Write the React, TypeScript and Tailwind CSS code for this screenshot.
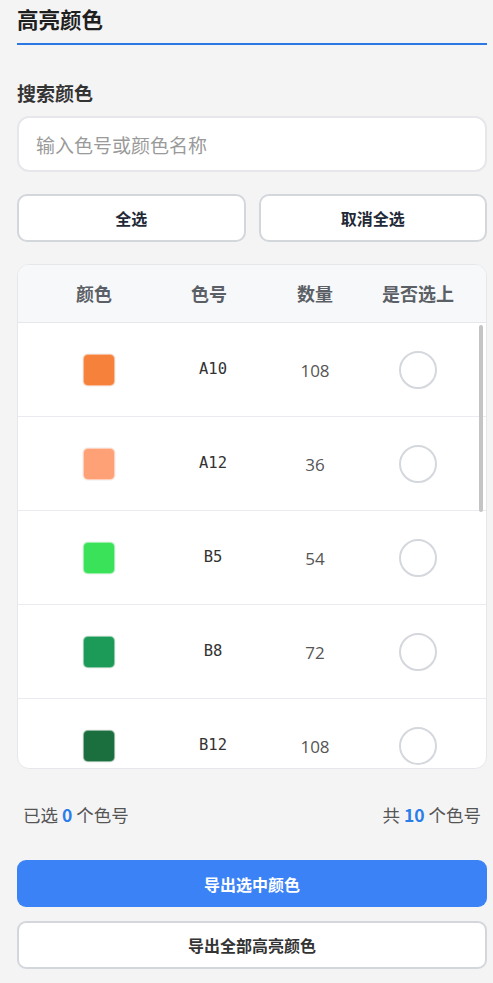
import React from "react";

const COLORS = [
  { code: "A10", hex: "#f5813a", count: 108 },
  { code: "A12", hex: "#ffa177", count: 36 },
  { code: "B5", hex: "#3ae25a", count: 54 },
  { code: "B8", hex: "#1b9b57", count: 72 },
  { code: "B12", hex: "#1b6e3d", count: 108 },
  { code: "C3", hex: "#5fb4f0", count: 48 },
  { code: "C7", hex: "#2a62c9", count: 24 },
  { code: "D2", hex: "#f4d23e", count: 60 },
  { code: "E4", hex: "#e8477a", count: 12 },
  { code: "F1", hex: "#7a4bc8", count: 30 },
];

const cjk = "font-['Noto_Sans_CJK_SC','Noto_Sans',sans-serif]";

function Row({ code, hex, count }: { code: string; hex: string; count: number }) {
  return (
    <div className="grid h-[94px] grid-cols-[152px_78px_134px_72px] items-center border-b border-[#e9ebf0]">
      <div className="flex justify-center pl-[10px]">
        <span
          className="h-[32px] w-[32px] rounded-[5px] border border-white/50 shadow-[0_0_0_1px_rgba(0,0,0,0.04)]"
          style={{ backgroundColor: hex }}
        />
      </div>
      <div className="pl-[8px] text-center font-['DejaVu_Sans_Mono',monospace] text-[15.5px] text-[#333]">{code}</div>
      <div className="pt-[2px] text-center font-['Open_Sans',sans-serif] text-[17px] text-[#555]">{count}</div>
      <div className="flex justify-center">
        <span className="h-[38px] w-[38px] rounded-full border-2 border-[#d4d7dc] bg-white" />
      </div>
    </div>
  );
}

export default function App() {
  return (
    <div className={`min-h-screen bg-[#f4f4f5] pl-[17px] pr-[6px] pt-[5px] ${cjk}`}>
      <h1 className="border-b-2 border-[#2b78e4] pb-[10px] text-[21.5px] font-bold leading-[28px] text-[#1f1f1f]">
        高亮颜色
      </h1>

      <div className="mt-[34px] text-[19px] font-bold leading-[28px] text-[#333]">搜索颜色</div>
      <input
        className="mt-[9px] h-[56px] w-full rounded-[12px] border-2 border-[#e6e7eb] bg-white px-[17px] text-[19px] text-[#333] outline-none placeholder:text-[#9a9a9a]"
        placeholder="输入色号或颜色名称"
      />

      <div className="mt-[22px] grid grid-cols-2 gap-[13px]">
        <button className="h-[48px] rounded-[10px] border-2 border-[#d3d6db] bg-white text-[16px] font-bold text-[#1f2937]">
          全选
        </button>
        <button className="h-[48px] rounded-[10px] border-2 border-[#d3d6db] bg-white text-[16px] font-bold text-[#1f2937]">
          取消全选
        </button>
      </div>

      <div className="relative mt-[22px] overflow-hidden rounded-[12px] border border-[#e5e7eb] bg-white">
        <div className="grid h-[58px] grid-cols-[152px_78px_134px_72px] items-center border-b border-[#e5e7eb] bg-[#f7f8fa] text-[18px] font-bold text-[#5b5f66]">
          <div className="text-center">颜色</div>
          <div className="text-center">色号</div>
          <div className="text-center">数量</div>
          <div className="text-center">是否选上</div>
        </div>
        <div className="h-[445px] overflow-hidden">
          {COLORS.map((c) => (
            <Row key={c.code} {...c} />
          ))}
        </div>
        <span className="absolute right-[3px] top-[60px] h-[187px] w-[4px] rounded-full bg-[#c4c4c4]" />
      </div>

      <div className="mt-[34px] flex items-center justify-between px-[6px] text-[17.5px] leading-[24px] text-[#555]">
        <span>
          已选 <b className="text-[#2b7de9]">0</b> 个色号
        </span>
        <span>
          共 <b className="text-[#2b7de9]">10</b> 个色号
        </span>
      </div>

      <button className="mt-[33px] h-[47px] w-full rounded-[9px] bg-[#3b82f6] text-[16px] font-bold text-white">
        导出选中颜色
      </button>
      <button className="mt-[14px] h-[48px] w-full rounded-[9px] border-2 border-[#d3d6db] bg-white text-[16px] font-bold text-[#333]">
        导出全部高亮颜色
      </button>
    </div>
  );
}
